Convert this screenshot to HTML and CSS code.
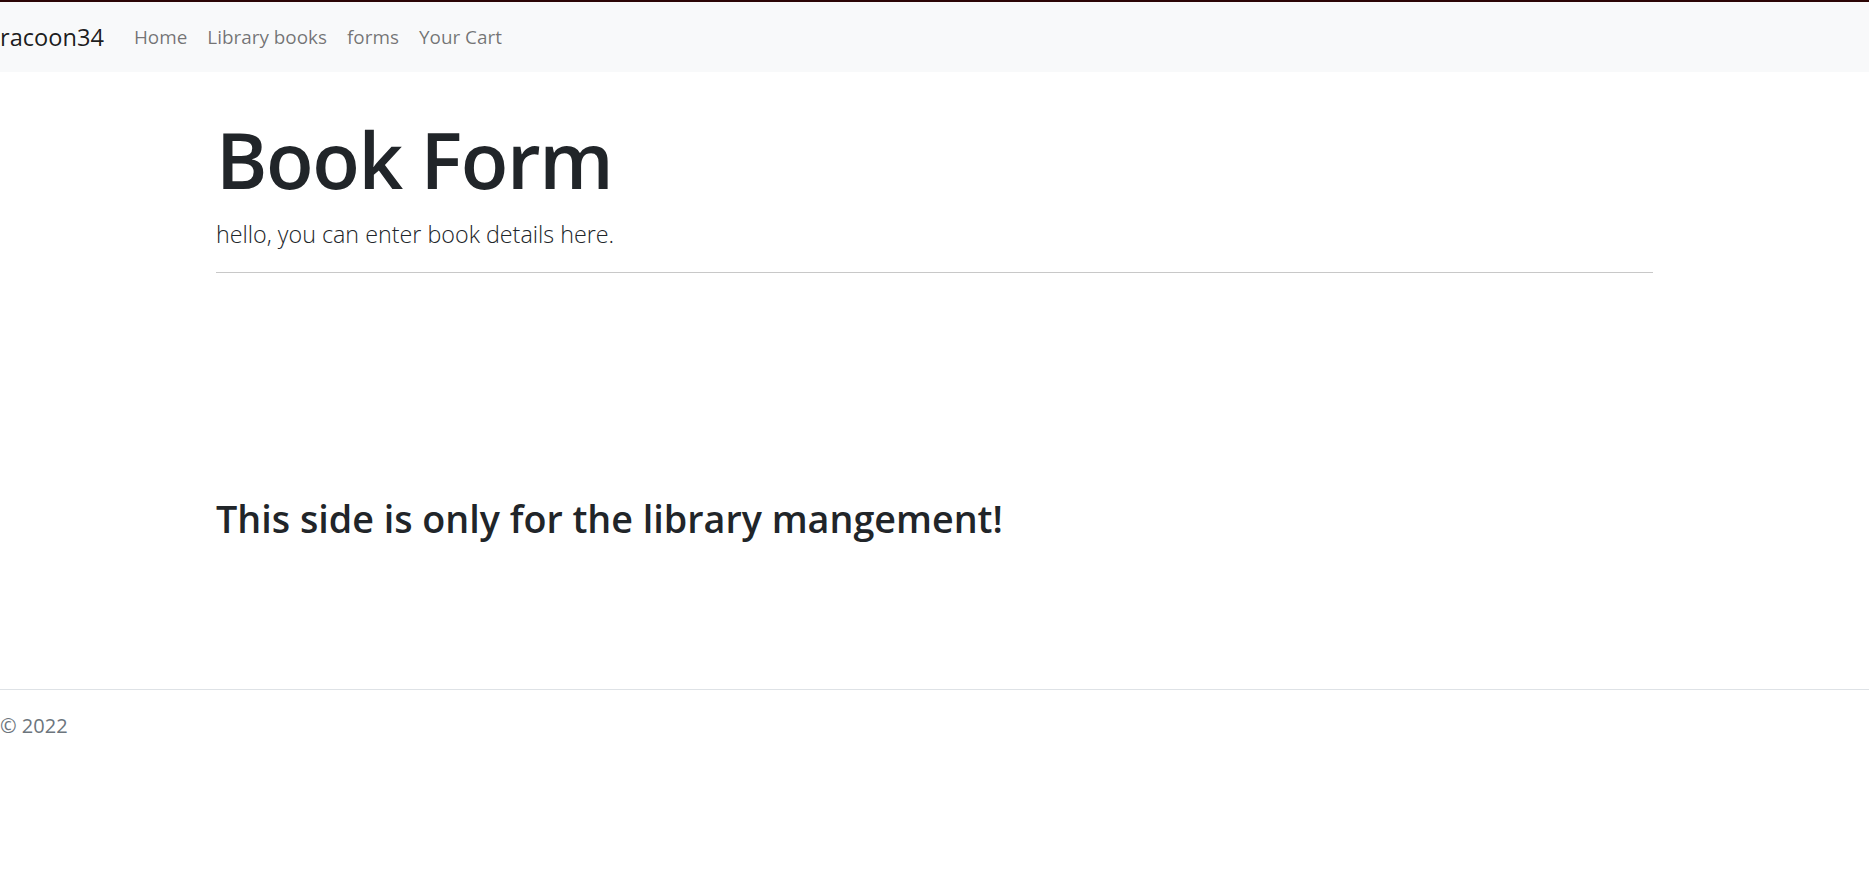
FILE: index.html
```html
<!DOCTYPE html>
<html lang="en">
<head>
<meta charset="utf-8">
<title>Book Form</title>
<link rel="stylesheet" href="styles.css">
</head>
<body>
<header class="topbar">
  <nav class="navbar">
    <a class="brand" href="#">racoon34</a>
    <ul class="nav-links">
      <li><a href="#">Home</a></li>
      <li><a href="#">Library books</a></li>
      <li><a href="#">forms</a></li>
      <li><a href="#">Your Cart</a></li>
    </ul>
  </nav>
</header>
<main class="container">
  <section class="jumbo">
    <h1 class="title">Book Form</h1>
    <p class="lead">hello, you can enter book details here.</p>
    <hr class="rule">
  </section>
  <h2 class="notice">This side is only for the library mangement!</h2>
</main>
<footer class="footer">
  <p class="copy">© 2022</p>
</footer>
</body>
</html>
```

FILE: styles.css
```css
* { box-sizing: border-box; }
html, body { margin: 0; padding: 0; }
body {
  font-family: "Open Sans", "Noto Sans", "Liberation Sans", sans-serif;
  color: #212529;
  background: #fff;
}
.topbar {
  border-top: 2px solid #2b0505;
  background: #f8f9fa;
}
.navbar {
  display: flex;
  align-items: center;
  height: 70px;
}
.brand {
  font-size: 23.6px;
  color: rgba(0,0,0,.9);
  text-decoration: none;
  margin-right: 20px;
}
.nav-links {
  display: flex;
  list-style: none;
  margin: 0;
  padding: 0;
}
.nav-links a {
  display: block;
  padding: 0 10px;
  font-size: 18.9px;
  color: rgba(0,0,0,.55);
  text-decoration: none;
}
.container {
  width: 1437px;
  margin: 0 auto;
}
.jumbo { padding-top: 41px; }
.title {
  margin: 0;
  font-size: 78px;
  font-weight: 600;
  line-height: 1.2;
  letter-spacing: -1.4px;
}
.lead {
  margin: 10px 0 0;
  font-size: 23.3px;
  font-weight: 300;
  line-height: 1.5;
}
.rule {
  margin: 20px 0 0;
  border: 0;
  border-top: 1px solid #c8c8c8;
}
.notice {
  margin: 223px 0 0;
  font-size: 37.7px;
  font-weight: 600;
  line-height: 1.2;
}
.footer {
  margin-top: 148px;
  border-top: 1px solid #dee2e6;
}
.copy {
  margin: 0;
  padding-top: 21px;
  font-size: 20px;
  line-height: 1.5;
  color: #6c757d;
}
```
